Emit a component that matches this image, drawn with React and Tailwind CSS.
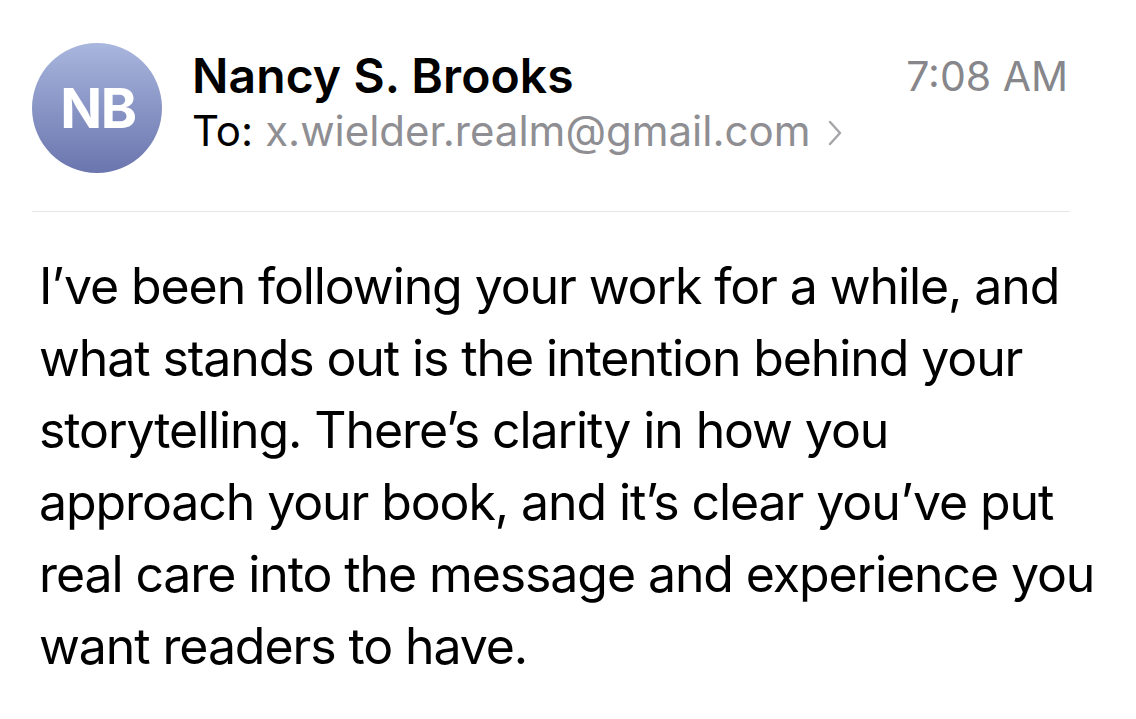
// EmailView: a single opened mail message with sender header and body

const LINES = [
  'I\u2019ve been following your work for a while, and',
  'what stands out is the intention behind your',
  'storytelling. There\u2019s clarity in how you',
  'approach your book, and it\u2019s clear you\u2019ve put',
  'real care into the message and experience you',
  'want readers to have.',
];

export default function App() {
  return (
    <div
      className="w-[1136px] h-[719px] bg-white overflow-hidden"
      style={{ fontFamily: 'Inter, "Noto Sans", sans-serif' }}
    >
      {/* Header */}
      <div className="flex items-start pl-[32px] pr-[68px] pt-[43px]">
        <div className="w-[130px] h-[130px] rounded-full bg-gradient-to-b from-[#a9b6dd] to-[#6b75ae] flex items-center justify-center shrink-0">
          <span className="text-white font-bold text-[55px] tracking-[-1.5px] leading-none pl-[2px]">NB</span>
        </div>

        <div className="ml-[30px] flex-1 min-w-0 pt-[4px]">
          <div className="text-[48px] font-semibold text-black leading-[58px] tracking-[0.1px]">
            Nancy S. Brooks
          </div>
          <div className="text-[42px] leading-[52px] flex items-center">
            <span className="text-black">To:</span>
            <span className="text-[#8e8e93] ml-[12px]">x.wielder.realm@gmail.com</span>
            <svg className="ml-[16px] mt-[4px]" width="16" height="28" viewBox="0 0 16 28" fill="none">
              <path d="M3 3l10 11-10 11" stroke="#a4a4a9" strokeWidth="2.4" strokeLinecap="round" strokeLinejoin="round" />
            </svg>
          </div>
        </div>

        <div className="text-[41px] text-[#86868b] leading-[58px] pt-[4px]">7:08 AM</div>
      </div>

      {/* Divider */}
      <div className="ml-[32px] mr-[66px] mt-[38px] h-px bg-[#e5e5ea]" />

      {/* Body */}
      <div className="pl-[39px] pt-[38px] text-[50px] leading-[72px] text-black tracking-[-1.1px]">
        {LINES.map((l) => (
          <div key={l} className="whitespace-nowrap">{l}</div>
        ))}
      </div>
    </div>
  );
}
